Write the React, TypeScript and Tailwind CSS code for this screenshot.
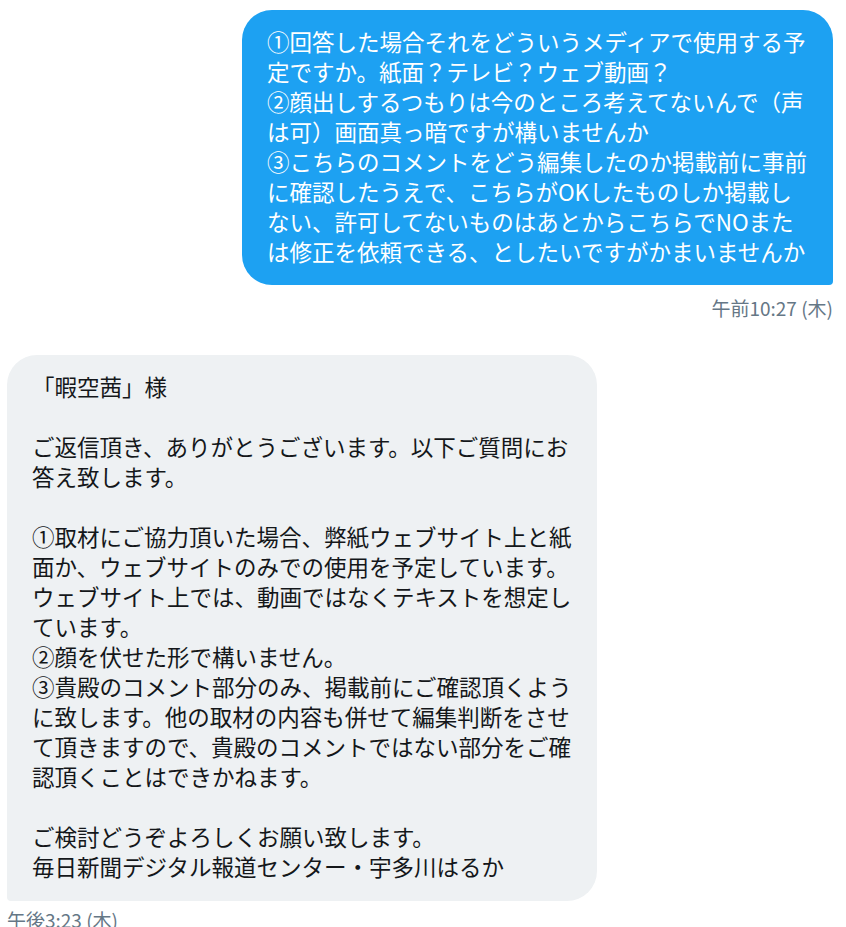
import React from "react";

const blueLines = [
  "①回答した場合それをどういうメディアで使用する予",
  "定ですか。紙面？テレビ？ウェブ動画？",
  "②顔出しするつもりは今のところ考えてないんで（声",
  "は可）画面真っ暗ですが構いませんか",
  "③こちらのコメントをどう編集したのか掲載前に事前",
  "に確認したうえで、こちらがOKしたものしか掲載し",
  "ない、許可してないものはあとからこちらでNOまた",
  "は修正を依頼できる、としたいですがかまいませんか",
];

const grayLines = [
  "「暇空茜」様",
  "",
  "ご返信頂き、ありがとうございます。以下ご質問にお",
  "答え致します。",
  "",
  "①取材にご協力頂いた場合、弊紙ウェブサイト上と紙",
  "面か、ウェブサイトのみでの使用を予定しています。",
  "ウェブサイト上では、動画ではなくテキストを想定し",
  "ています。",
  "②顔を伏せた形で構いません。",
  "③貴殿のコメント部分のみ、掲載前にご確認頂くよう",
  "に致します。他の取材の内容も併せて編集判断をさせ",
  "て頂きますので、貴殿のコメントではない部分をご確",
  "認頂くことはできかねます。",
  "",
  "ご検討どうぞよろしくお願い致します。",
  "毎日新聞デジタル報道センター・宇多川はるか",
];

const font = { fontFamily: '"Noto Sans CJK JP", "Noto Sans", sans-serif' };

export default function App() {
  return (
    <div
      className="w-[846px] h-[927px] overflow-hidden bg-white pt-[10px]"
      style={font}
    >
      <div className="flex flex-col items-end pr-[13px]">
        <div className="w-[591px] rounded-[30px] rounded-br-[4px] bg-[#1da1f2] px-[25px] pt-[16px] pb-[19px] text-white text-[22.5px] leading-[30px] whitespace-nowrap">
          {blueLines.map((l, i) => (
            <div key={i} className="h-[30px]">
              {l}
            </div>
          ))}
        </div>
        <div className="mt-[10px] text-[19px] leading-[26px] text-[#657786]">
          午前10:27 (木)
        </div>
      </div>
      <div className="mt-[34px] flex flex-col items-start pl-[7px]">
        <div className="w-[590px] rounded-[30px] rounded-bl-[4px] bg-[#eef1f3] px-[25px] pt-[16px] pb-[20px] text-[#14171a] text-[22.5px] leading-[30px] whitespace-nowrap">
          {grayLines.map((l, i) => (
            <div key={i} className="h-[30px]">
              {l}
            </div>
          ))}
        </div>
        <div className="mt-[6px] text-[19px] leading-[26px] text-[#657786]">
          午後3:23 (木)
        </div>
      </div>
    </div>
  );
}
